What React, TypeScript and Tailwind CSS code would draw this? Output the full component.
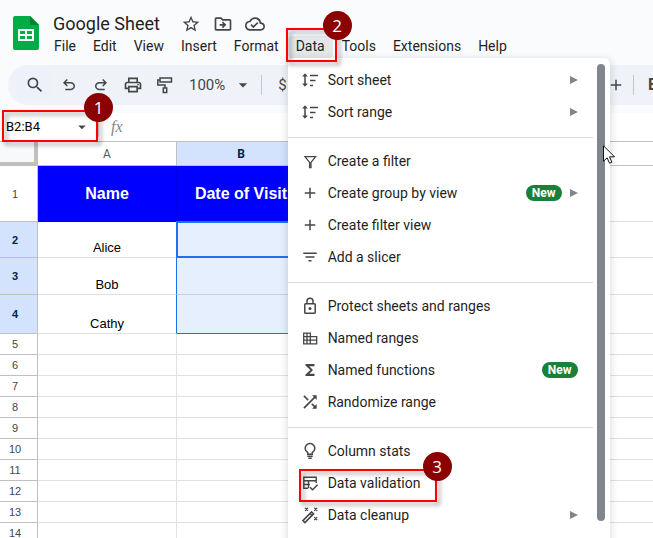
import type { ReactNode } from 'react'
import {
    MdAdd,
    MdArrowDropDown,
    MdFilterList,
    MdFunctions,
    MdOutlineCloudDone,
    MdOutlineDriveFileMove,
    MdOutlinePrint,
    MdSearch,
    MdShuffle,
    MdStarBorder,
} from 'react-icons/md'

const Icon = ({ children, className = 'size-[18px]' }: { children: ReactNode; className?: string }) => (
    <svg viewBox="0 0 18 18" fill="none" stroke="currentColor" strokeWidth="1.5" className={className} aria-hidden="true">
        {children}
    </svg>
)

const SortIcon = () => (
    <Icon>
        <path d="M4 4v10M9 4.5h8M9 9.5h5.5M9 14.5h3" />
        <path d="M1.2 5.5L4 2.3 6.8 5.5zM1.2 12.5L4 15.7 6.8 12.5z" fill="currentColor" stroke="none" />
    </Icon>
)

const FilterIcon = () => (
    <Icon>
        <path d="M4 4.7h10.6L10 10.4v5.3H8.6v-5.3z" strokeWidth="1.3" />
    </Icon>
)

const LockIcon = () => (
    <Icon>
        <rect x="3.8" y="6.8" width="10.4" height="9.4" rx="0.8" />
        <path d="M6 6.8V4.3a3 3 0 0 1 6 0v2.5" />
        <circle cx="9" cy="11.5" r="1.5" fill="currentColor" stroke="none" />
    </Icon>
)

const RangesIcon = () => (
    <Icon>
        <path d="M2.7 4.2h6.6v10.6H2.7zM9.3 7.7h6.4v7.1H9.3M2.7 7.7h6.6M2.7 11.2h13M6 4.2v10.6" strokeWidth="1.3" />
    </Icon>
)

const BulbIcon = () => (
    <Icon>
        <path d="M6.7 12.2v-1.7a4.8 4.8 0 1 1 4.6 0v1.7z" />
        <path d="M6.3 14.3h5.4M7.3 16.2h3.4" />
    </Icon>
)

const ValidationIcon = () => (
    <Icon>
        <path d="M7 14.2H2.8V3.2h12.4V9M2.8 6.8h12.4M2.8 10.5H9M7.5 6.8v7.4" strokeWidth="1.4" />
        <path d="M9 13.2l2.6 2.6 5-5" />
    </Icon>
)

const WandIcon = () => (
    <Icon>
        <path d="M1.9 14.6l8.7-8.7 2 2-8.7 8.7zM9 7.5l2 2" />
        <path d="M4 1.8l3 3M7 1.8l-3 3M13.2 1.8l3 3M16.2 1.8l-3 3M13.2 11.2l3 3M16.2 11.2l-3 3" strokeWidth="1.2" />
    </Icon>
)

const UndoIcon = ({ className = '' }: { className?: string }) => (
    <svg viewBox="0 -960 960 960" fill="currentColor" className={`size-[18px] ${className}`} aria-hidden="true">
        <path d="M280-200v-80h284q63 0 109.5-40T720-420q0-60-46.5-100T564-560H312l104 104-56 56-200-200 200-200 56 56-104 104h252q97 0 169.5 63T800-420q0 94-72.5 157T564-200H280Z" />
    </svg>
)

const PaintIcon = () => (
    <Icon>
        <path d="M4 2h11.5v4H4zM4 4H1.8v5H9v3M7.3 12h3.4v4.5H7.3z" />
    </Icon>
)

const SheetsLogo = () => (
    <svg viewBox="0 0 26 34" className="h-[34px] w-[26px] shrink-0" aria-hidden="true">
        <path d="M2 0h15l9 9v23a2 2 0 0 1-2 2H2a2 2 0 0 1-2-2V2a2 2 0 0 1 2-2z" fill="#00ac47" />
        <path d="M17 0l9 9h-9z" fill="#00832d" />
        <path d="M5 13h16v12H5zM7 15v3h5v-3zM14 15v3h5v-3zM7 20v3h5v-3zM14 20v3h5v-3z" fill="#fff" fillRule="evenodd" />
    </svg>
)

// red frame with a numbered badge on its top right corner
const Callout = ({ step, className }: { step: number; className: string }) => (
    <span className={`pointer-events-none absolute z-20 ${className}`}>
        <span className="absolute inset-0 border-2 border-[#ff0000] drop-shadow-[3px_3px_2px_rgba(0,0,0,0.4)]" />
        <span className="absolute -top-[17px] -right-[15px] flex size-[29px] items-center justify-center rounded-full bg-[#8b0000] font-['Open_Sans',sans-serif] text-[17px] text-white">
            {step}
        </span>
    </span>
)

type Item = { label: string; icon: ReactNode; badge?: boolean; arrow?: boolean; step?: number }

const groups: Item[][] = [
    [
        { label: 'Sort sheet', icon: <SortIcon />, arrow: true },
        { label: 'Sort range', icon: <SortIcon />, arrow: true },
    ],
    [
        { label: 'Create a filter', icon: <FilterIcon /> },
        { label: 'Create group by view', icon: <MdAdd className="size-[18px]" />, badge: true, arrow: true },
        { label: 'Create filter view', icon: <MdAdd className="size-[18px]" /> },
        { label: 'Add a slicer', icon: <MdFilterList className="size-[18px]" /> },
    ],
    [
        { label: 'Protect sheets and ranges', icon: <LockIcon /> },
        { label: 'Named ranges', icon: <RangesIcon /> },
        { label: 'Named functions', icon: <MdFunctions className="size-[18px]" />, badge: true },
        { label: 'Randomize range', icon: <MdShuffle className="size-[20px]" /> },
    ],
    [
        { label: 'Column stats', icon: <BulbIcon /> },
        { label: 'Data validation', icon: <ValidationIcon />, step: 3 },
        { label: 'Data cleanup', icon: <WandIcon />, arrow: true },
    ],
]

const MenuItem = ({ label, icon, badge, arrow, step }: Item) => (
    <button className="relative flex h-8 w-full items-center pr-[15px] pl-3 text-left">
        <span className="flex w-5 justify-center text-[#444746]">{icon}</span>
        <span className="ml-2 flex-1 whitespace-nowrap">{label}</span>
        {badge && (
            <span className="rounded-full bg-[#188038] px-1.5 text-[12px] leading-4 font-bold text-white">New</span>
        )}
        {arrow && (
            <svg viewBox="0 0 8 8" className="ml-2 size-2 fill-[#80868b]" aria-hidden="true">
                <path d="M0 0l8 4-8 4z" />
            </svg>
        )}
        {step && <Callout step={step} className="top-0.5 left-[11px] h-[33px] w-[138px]" />}
    </button>
)

const DataMenu = () => (
    <div className="absolute top-full left-0 z-10 flex w-[322px] rounded-md bg-white pt-1.5 pb-12 text-[#1f1f1f] shadow-[0_2px_6px_2px_rgba(60,64,67,0.15)]">
        <div className="flex-1">
            {groups.map((group, i) => (
                <div key={i} className={i > 0 ? 'mt-[9px] border-t border-[#dadce0] pt-[7px]' : ''}>
                    {group.map((item) => (
                        <MenuItem key={item.label} {...item} />
                    ))}
                </div>
            ))}
        </div>
        <div className="mr-[5px] mb-2.5 ml-1 w-2 rounded-full bg-[#80868b]" />
    </div>
)

const rows = [
    { n: 1, height: 'h-14', name: 'Name' },
    { n: 2, height: 'h-9', name: 'Alice' },
    { n: 3, height: 'h-[37px]', name: 'Bob' },
    { n: 4, height: 'h-[39px]', name: 'Cathy' },
    ...[5, 6, 7, 8, 9, 10, 11, 12, 13, 14].map((n) => ({ n, height: 'h-[21px]', name: '' })),
]

const Grid = () => (
    <table className="w-full table-fixed border-separate border-spacing-0 border-t border-[#c0c0c0] bg-white font-['Liberation_Sans',Arial,sans-serif] text-[13px] text-black">
        <colgroup>
            <col className="w-[38px]" />
            <col className="w-[139px]" />
            <col className="w-[129px]" />
            <col />
        </colgroup>
        <thead>
            <tr className="h-6 font-['Roboto',sans-serif] text-[12px] text-[#575a5a]">
                <th className="border-r-4 border-b-4 border-[#c0c0c0] bg-[#f8f9fa] p-0" />
                <th className="border-r border-b border-[#c0c0c0] p-0 font-normal">A</th>
                <th className="border-r border-b border-[#c0c0c0] bg-[#d3e3fd] p-0 font-bold text-[#041e49]">B</th>
                <th className="border-b border-[#c0c0c0] p-0" />
            </tr>
        </thead>
        <tbody>
            {rows.map(({ n, height, name }) => {
                const head = n === 1
                const selected = n > 1 && n < 5
                return (
                    <tr key={n} className={height}>
                        <th
                            className={`border-r border-b border-[#c0c0c0] p-0 pr-[7px] text-[11px] leading-4 ${selected ? 'bg-[#d3e3fd] font-bold text-[#041e49]' : 'font-normal text-[#444746]'}`}
                        >
                            {n}
                        </th>
                        <td
                            className={`border-r border-b p-0 text-center ${head ? 'border-[#0000e0] bg-[#0000ff] align-middle text-[16px] font-bold text-white' : 'border-[#e1e1e1] align-bottom'} ${selected ? 'border-r-[#1a73e8]' : ''}`}
                        >
                            {name && <div className="leading-[18px]">{name}</div>}
                        </td>
                        <td
                            className={`relative border-r border-b p-0 text-center ${head ? 'border-[#0000e0] bg-[#0000ff] text-[16px] font-bold text-white' : 'border-[#e1e1e1]'} ${selected ? 'bg-[#e6effd]' : ''} ${n === 3 ? 'border-b-[#c9cfdb]' : ''} ${n === 4 ? 'border-b-[#1a73e8]' : ''}`}
                        >
                            {head && <div className="leading-[18px]">Date of Visit</div>}
                            {n === 2 && <div className="absolute -inset-px border-2 border-[#1a73e8]" />}
                        </td>
                        <td className="border-b border-[#e1e1e1] p-0" />
                    </tr>
                )
            })}
        </tbody>
    </table>
)

const Header = () => (
    <header className="flex h-[65px] pt-4 pl-[13px]">
        <SheetsLogo />
        <div className="-mt-1 ml-[7px]">
            <div className="flex h-6 items-center pl-[7px] text-[#444746]">
                <h1 className="w-32 text-[18px] leading-6 text-[#1f1f1f]">Google Sheet</h1>
                <div className="flex gap-3">
                    <button aria-label="Star"><MdStarBorder className="size-5" /></button>
                    <button aria-label="Move"><MdOutlineDriveFileMove className="size-5" /></button>
                    <button aria-label="Saved to Drive"><MdOutlineCloudDone className="size-5" /></button>
                </div>
            </div>
            <nav className="flex h-[22px] items-center gap-px text-[14px] leading-5 text-[#1f1f1f]">
                {['File', 'Edit', 'View', 'Insert', 'Format'].map((name) => (
                    <button key={name} className="px-2 pb-0.5">{name}</button>
                ))}
                <div className="relative">
                    <button className="rounded-sm bg-[#e4e7ea] px-2 pb-0.5">Data</button>
                    <DataMenu />
                    <Callout step={2} className="-top-2 -left-0.5 h-[34px] w-[51px]" />
                </div>
                {['Tools', 'Extensions', 'Help'].map((name) => (
                    <button key={name} className="px-2 pb-0.5">{name}</button>
                ))}
            </nav>
        </div>
    </header>
)

const Toolbar = () => (
    <div className="ml-2 flex h-10 items-center overflow-hidden rounded-l-full bg-[#eff3f9] pl-[9px] text-[#444746]">
        <button aria-label="Search" className="flex h-7 w-9 items-center justify-center rounded-sm bg-[#edf2fa]">
            <MdSearch className="size-5" />
        </button>
        <button aria-label="Undo" className="flex w-8 justify-center"><UndoIcon /></button>
        <button aria-label="Redo" className="flex w-8 justify-center"><UndoIcon className="-scale-x-100" /></button>
        <button aria-label="Print" className="flex w-8 justify-center"><MdOutlinePrint className="size-5" /></button>
        <button aria-label="Paint format" className="flex w-8 justify-center"><PaintIcon /></button>
        <button className="ml-2 flex items-center gap-2 text-[15px]">
            100% <MdArrowDropDown className="size-5" />
        </button>
        <div className="ml-2 h-5 w-px bg-[#c7c7c7]" />
        <button className="ml-4 text-[15px]">$</button>
        <div className="flex-1" />
        <button aria-label="Increase font size"><MdAdd className="size-[18px]" /></button>
        <div className="ml-2 h-5 w-px bg-[#c7c7c7]" />
        <button className="ml-3.5 w-[5px] text-[16px] font-bold">B</button>
    </div>
)

const FormulaBar = () => (
    <div className="mt-2 flex h-7 items-center bg-white">
        <div className="relative flex h-full w-[98px] items-center">
            <input aria-label="Name box" defaultValue="B2:B4" className="w-[73px] bg-transparent pl-1.5 text-[13px] text-black outline-none" />
            <button aria-label="Named ranges list"><MdArrowDropDown className="size-[18px] text-[#444746]" /></button>
            <Callout step={1} className="-top-[3px] -bottom-px left-0.5 w-24" />
        </div>
        <div className="h-5 w-px bg-[#c7c7c7]" />
        <span className="ml-3 font-['Liberation_Serif',serif] text-[16px] text-[#80868b] italic">fx</span>
    </div>
)

const Cursor = () => (
    <svg viewBox="0 0 12 19" className="pointer-events-none absolute top-[145px] left-[603px] z-30 h-[19px] w-3" aria-hidden="true">
        <path d="M.5.8v15.4l3.6-3.4 2.4 5.4 2.4-1-2.4-5.4h5z" fill="#fff" stroke="#10101c" />
    </svg>
)

const App = () => {
    return (
        <div className="relative h-screen overflow-hidden bg-[#f9fbfd] font-['Roboto',sans-serif]">
            <Header />
            <Toolbar />
            <FormulaBar />
            <Grid />
            <Cursor />
        </div>
    )
}

export default App
